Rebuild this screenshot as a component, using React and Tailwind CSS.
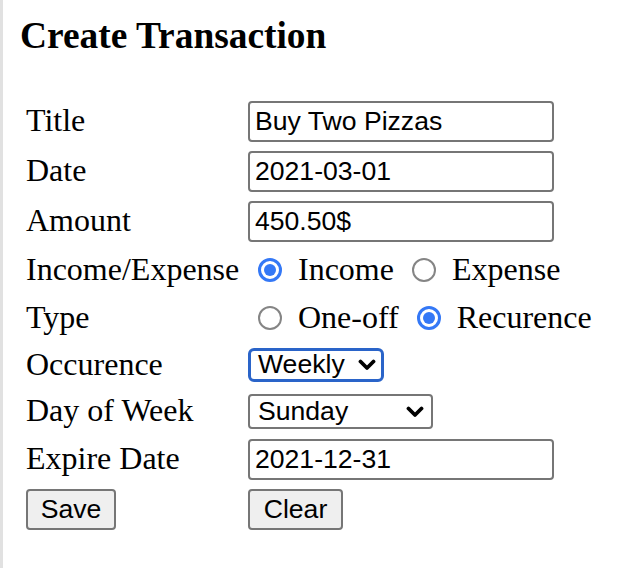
import React from "react";

const serif = "font-['Liberation_Serif','Times_New_Roman',serif]";
const sans = "font-['Liberation_Sans',Arial,sans-serif]";

function Chevron() {
  return (
    <svg width="18" height="12" viewBox="0 0 18 12" className="shrink-0">
      <polyline
        points="2.5,2.5 9,9 15.5,2.5"
        fill="none"
        stroke="#000"
        strokeWidth="3.8"
        strokeLinecap="round"
        strokeLinejoin="round"
      />
    </svg>
  );
}

function Radio({ checked, className = "" }) {
  if (checked) {
    return (
      <span className={`flex h-[24px] w-[24px] shrink-0 items-center justify-center rounded-full border-[3px] border-[#3478f6] bg-white ${className}`}>
        <span className="h-[12px] w-[12px] rounded-full bg-[#3478f6]" />
      </span>
    );
  }
  return (
    <span className={`block h-[24px] w-[24px] shrink-0 rounded-full border-2 border-[#858585] bg-white ${className}`} />
  );
}

function TextBox({ value }) {
  return (
    <input
      readOnly
      value={value}
      className={`${sans} h-[41px] w-[306px] rounded-[4px] border-2 border-[#767676] bg-white px-[5px] text-[26.6px] text-black outline-none`}
    />
  );
}

function Row({ label, h, children }) {
  return (
    <div className={`flex items-center ${h}`}>
      <div className="w-[222px] shrink-0 pb-[3px] text-[32px] text-black">{label}</div>
      <div className="flex items-center">{children}</div>
    </div>
  );
}

export default function App() {
  return (
    <div className={`${serif} min-h-[568px] w-[626px] border-l-[3px] border-[#e1e1e1] bg-white text-black`}>
      <h3 className="ml-[17px] pt-[15px] text-[37.4px] font-bold leading-[41px]">
        Create Transaction
      </h3>
      <div className="ml-[23px] mt-[40px] flex flex-col">
        <Row label="Title" h="h-[50px]">
          <TextBox value="Buy Two Pizzas" />
        </Row>
        <Row label="Date" h="h-[50px]">
          <TextBox value="2021-03-01" />
        </Row>
        <Row label="Amount" h="h-[50px]">
          <TextBox value="450.50$" />
        </Row>
        <Row label="Income/Expense" h="h-[48px]">
          <div className="ml-[10px] flex items-center text-[32px]">
            <Radio checked />
            <span className="ml-[16px] pb-[3px]">Income</span>
            <Radio className="ml-[18px]" />
            <span className="ml-[16px] pb-[3px]">Expense</span>
          </div>
        </Row>
        <Row label="Type" h="h-[48px]">
          <div className="ml-[10px] flex items-center text-[32px]">
            <Radio />
            <span className="ml-[16px] pb-[3px]">One-off</span>
            <Radio checked className="ml-[18px]" />
            <span className="ml-[16px] pb-[3px]">Recurence</span>
          </div>
        </Row>
        <Row label="Occurence" h="h-[46px]">
          <div
            className={`${sans} flex h-[34px] w-[136px] items-center justify-between rounded-[6px] border-[3px] border-[#2a64c9] bg-white pl-[7px] pr-[5px] text-[26.6px]`}
          >
            <span>Weekly</span>
            <Chevron />
          </div>
        </Row>
        <Row label="Day of Week" h="h-[47px]">
          <div
            className={`${sans} flex h-[35px] w-[185px] items-center justify-between rounded-[4px] border-2 border-[#767676] bg-white pl-[8px] pr-[7px] text-[26.6px]`}
          >
            <span>Sunday</span>
            <Chevron />
          </div>
        </Row>
        <Row label="Expire Date" h="h-[48px]">
          <TextBox value="2021-12-31" />
        </Row>
        <div className="flex h-[52px] items-center">
          <div className="w-[222px] shrink-0">
            <button
              className={`${sans} h-[41px] w-[90px] rounded-[4px] border-2 border-[#767676] bg-[#efefef] text-[26.6px] leading-none text-black`}
            >
              Save
            </button>
          </div>
          <button
            className={`${sans} h-[41px] w-[95px] rounded-[4px] border-2 border-[#767676] bg-[#efefef] text-[26.6px] leading-none text-black`}
          >
            Clear
          </button>
        </div>
      </div>
    </div>
  );
}
